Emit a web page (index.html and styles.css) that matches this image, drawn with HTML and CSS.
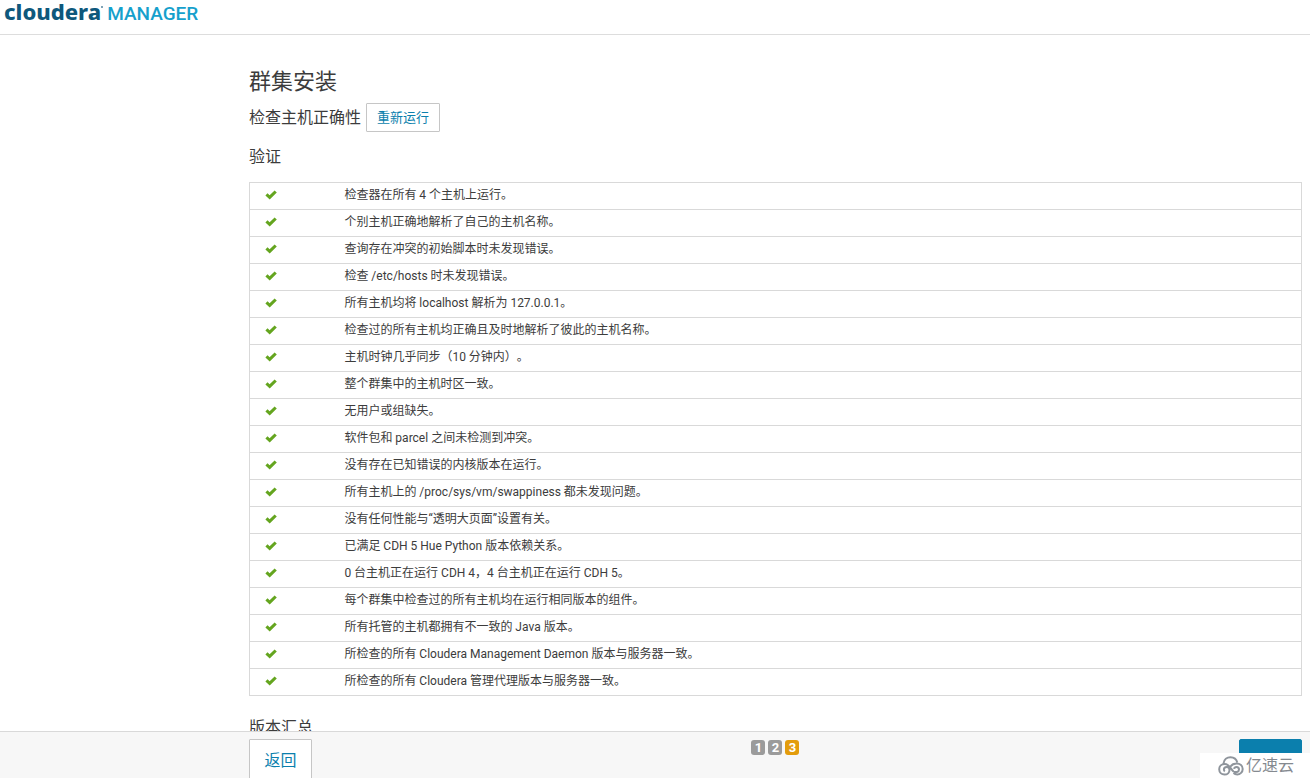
FILE: index.html
```html
<!DOCTYPE html>
<html lang="zh-CN">
<head>
<meta charset="utf-8">
<title>群集安装 - Cloudera Manager</title>
<link rel="stylesheet" href="styles.css">
</head>
<body>
<svg class="sprite" aria-hidden="true">
  <symbol id="check" viewBox="0 0 12 10"><path d="M0.4 5.400 2.500 3.200 4.600 5.200 9.600 0.500 11.800 2.600 4.700 9.600Z"/></symbol>
</svg>
<header class="topbar">
  <a class="brand" href="#"><span class="brand-name">cloudera</span><span class="brand-mark"></span><span class="brand-product">MANAGER</span></a>
</header>
<main class="content">
  <h1 class="title">群集安装</h1>
  <div class="step">
    <h2 class="subtitle">检查主机正确性</h2>
    <button class="btn" type="button">重新运行</button>
  </div>
  <h2 class="subtitle section">验证</h2>
  <table class="checks">
    <tbody>
      <tr><td class="state"><svg class="check"><use href="#check"/></svg></td><td>检查器在所有 4 个主机上运行。</td></tr>
      <tr><td class="state"><svg class="check"><use href="#check"/></svg></td><td>个别主机正确地解析了自己的主机名称。</td></tr>
      <tr><td class="state"><svg class="check"><use href="#check"/></svg></td><td>查询存在冲突的初始脚本时未发现错误。</td></tr>
      <tr><td class="state"><svg class="check"><use href="#check"/></svg></td><td>检查 /etc/hosts 时未发现错误。</td></tr>
      <tr><td class="state"><svg class="check"><use href="#check"/></svg></td><td>所有主机均将 localhost 解析为 127.0.0.1。</td></tr>
      <tr><td class="state"><svg class="check"><use href="#check"/></svg></td><td>检查过的所有主机均正确且及时地解析了彼此的主机名称。</td></tr>
      <tr><td class="state"><svg class="check"><use href="#check"/></svg></td><td>主机时钟几乎同步（10 分钟内）。</td></tr>
      <tr><td class="state"><svg class="check"><use href="#check"/></svg></td><td>整个群集中的主机时区一致。</td></tr>
      <tr><td class="state"><svg class="check"><use href="#check"/></svg></td><td>无用户或组缺失。</td></tr>
      <tr><td class="state"><svg class="check"><use href="#check"/></svg></td><td>软件包和 parcel 之间未检测到冲突。</td></tr>
      <tr><td class="state"><svg class="check"><use href="#check"/></svg></td><td>没有存在已知错误的内核版本在运行。</td></tr>
      <tr><td class="state"><svg class="check"><use href="#check"/></svg></td><td>所有主机上的 /proc/sys/vm/swappiness 都未发现问题。</td></tr>
      <tr><td class="state"><svg class="check"><use href="#check"/></svg></td><td>没有任何性能与“透明大页面”设置有关。</td></tr>
      <tr><td class="state"><svg class="check"><use href="#check"/></svg></td><td>已满足 CDH 5 Hue Python 版本依赖关系。</td></tr>
      <tr><td class="state"><svg class="check"><use href="#check"/></svg></td><td>0 台主机正在运行 CDH 4，4 台主机正在运行 CDH 5。</td></tr>
      <tr><td class="state"><svg class="check"><use href="#check"/></svg></td><td>每个群集中检查过的所有主机均在运行相同版本的组件。</td></tr>
      <tr><td class="state"><svg class="check"><use href="#check"/></svg></td><td>所有托管的主机都拥有不一致的 Java 版本。</td></tr>
      <tr><td class="state"><svg class="check"><use href="#check"/></svg></td><td>所检查的所有 Cloudera Management Daemon 版本与服务器一致。</td></tr>
      <tr><td class="state"><svg class="check"><use href="#check"/></svg></td><td>所检查的所有 Cloudera 管理代理版本与服务器一致。</td></tr>
    </tbody>
  </table>
  <h2 class="subtitle summary">版本汇总</h2>
</main>
<footer class="actions">
  <button class="btn btn-large" type="button">返回</button>
  <ol class="pages"><li class="page">1</li><li class="page">2</li><li class="page current">3</li></ol>
  <button class="btn btn-large btn-primary" type="button" aria-label="继续"></button>
</footer>
<div class="watermark">
  <svg class="cloud" viewBox="0 0 26 20" aria-hidden="true">
    <path d="M5.500 7.500C6 3.500 9 1.200 12.500 1.200c3.500 0 6 2 6.800 5.300M15.500 15.500C12.500 13 11.500 8 6.800 8 3.500 8 1.200 10.300 1.200 13.200c0 3 2.300 5.300 5.300 5.300 3 0 5-2 5-4.600 0-1.800-1.200-2.900-2.800-2.900-1.700 0-2.800 1.100-2.800 2.600 0 .8.300 1.400.9 1.800M12.500 10.500c1.400-2 3.500-3 6-3 3.600 0 6.200 2.400 6.200 5.500s-2.500 5.500-5.500 5.500c-1.500 0-2.700-.5-3.700-1.400M15.500 15.500c2 1.200 5.500.6 5.500-2 0-1.500-1.100-2.500-2.500-2.500-1.300 0-2.200.8-2.400 1.900"/>
  </svg>
  <span>亿速云</span>
</div>
</body>
</html>
```
FILE: styles.css
```css
* { box-sizing: border-box; }

body {
  display: flex;
  flex-direction: column;
  height: 100vh;
  margin: 0;
  overflow: hidden;
  background: #fff;
  color: #3c3c3c;
  font: 12px/18px Roboto, "Noto Sans CJK SC", sans-serif;
  text-spacing-trim: space-all;
}

.sprite { display: none; }

.topbar {
  flex: none;
  padding: 0 4px 9px;
  border-bottom: 1px solid #ddd;
}

.brand {
  display: flex;
  align-items: baseline;
  line-height: 22px;
  text-decoration: none;
}

.brand-name {
  color: #0e587c;
  font-family: "Noto Sans", sans-serif;
  font-size: 22px;
  font-weight: 800;
}

.brand-mark {
  align-self: flex-start;
  width: 2px;
  height: 2px;
  margin: 6px 4px 0 0;
  background: #7fa3b6;
}

.brand-product {
  color: #16a0cc;
  font-size: 19px;
  font-weight: 500;
}

.content {
  flex: 1;
  min-height: 0;
  overflow: hidden;
  padding: 32px 8px 0 19%;
}

.title {
  margin: 0 0 6px;
  font-size: 22px;
  font-weight: 400;
  line-height: 30px;
}

.step {
  display: flex;
  align-items: center;
  gap: 5px;
}

.subtitle {
  margin: 0;
  font-size: 16px;
  font-weight: 400;
  line-height: 24px;
}

.section { margin: 13px 0; }

.summary { margin-top: 20px; }

.btn {
  padding: 5px 10px;
  border: 1px solid #c6c6c6;
  border-radius: 1px;
  background: #fff;
  color: #0b7fad;
  font: 13px/17px Roboto, "Noto Sans CJK SC", sans-serif;
}

.checks {
  width: 100%;
  border: 1px solid #d9d9d9;
  border-collapse: collapse;
}

.checks td {
  height: 27px;
  padding: 3px 0 5px;
  border-top: 1px solid #d9d9d9;
}

.checks .state {
  width: 95px;
  padding-left: 15px;
}

.check {
  display: block;
  width: 12px;
  height: 10px;
  fill: #64a51f;
}

.actions {
  flex: none;
  display: grid;
  grid-template-columns: 1fr auto 1fr;
  align-items: start;
  height: 47px;
  padding: 7px 8px 0 19%;
  overflow: hidden;
  border-top: 1px solid #d9d9d9;
  background: #f7f7f7;
}

.btn-large {
  justify-self: start;
  min-width: 63px;
  min-height: 44px;
  padding: 9px 14px;
  font-size: 16px;
  line-height: 24px;
}

.btn-primary {
  justify-self: end;
  border-color: #0b7fad;
  border-radius: 2px;
  background: #0b7fad;
}

.pages {
  display: flex;
  gap: 3px;
  margin: 1px 0 0;
  padding: 0;
  list-style: none;
}

.page {
  width: 14px;
  border-radius: 3px;
  background: #9b9b9b;
  color: #fff;
  font-size: 13px;
  font-weight: 700;
  line-height: 15px;
  text-align: center;
}

.current { background: #e39c0c; }

.watermark {
  position: absolute;
  right: 0;
  bottom: 0;
  display: flex;
  align-items: center;
  gap: 2px;
  height: 25px;
  padding: 0 16px 0 18px;
  background: #fff;
  color: #858a90;
  font-size: 16px;
  line-height: 25px;
}

.cloud {
  width: 26px;
  height: 20px;
  fill: none;
  stroke: #8f959c;
  stroke-width: 2;
}
```
